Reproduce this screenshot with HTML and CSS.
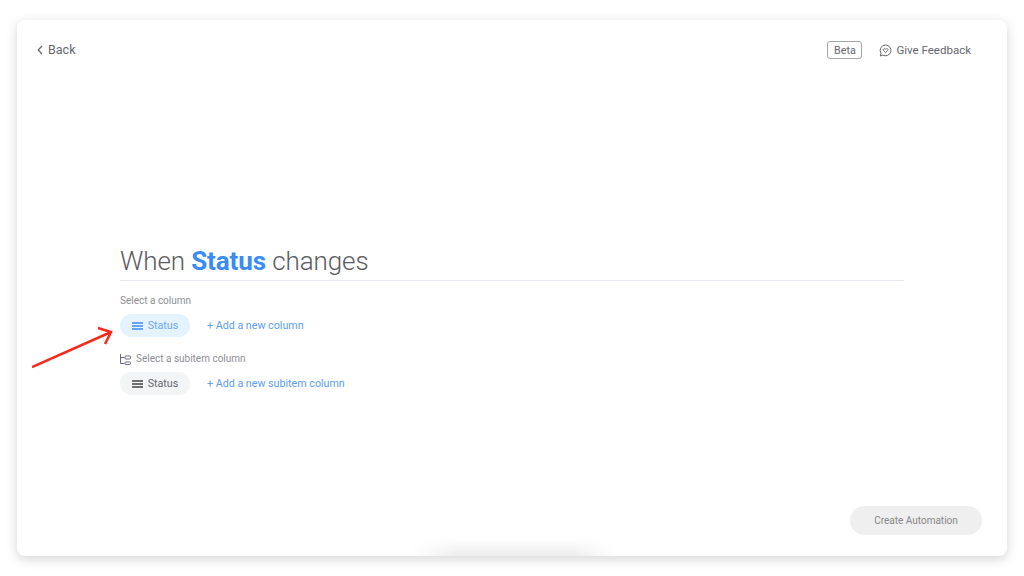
FILE: index.html
```html
<!DOCTYPE html>
<html lang="en">
<head>
    <meta charset="UTF-8">
    <meta name="viewport" content="width=device-width, initial-scale=1.0">
    <title>Create Automation</title>
    <link rel="stylesheet" href="styles.css">
</head>
<body>

<div class="card">
    <div class="top-bar">
        <a class="back-link">
            <svg class="back-icon" width="6" height="10" viewBox="0 0 6 10"><path d="M5 1L1.200 5L5 9" fill="none" stroke="#676879" stroke-width="1.300"/></svg>
            Back
        </a>
        <div class="top-actions">
            <span class="beta-tag">Beta</span>
            <a class="feedback-link">
                <svg width="13" height="13" viewBox="0 0 13 13" fill="none" stroke="#666" stroke-width="1">
                    <path d="M6.600 1a5.400 5.400 0 1 1-2.700 10.100L1.300 12l.7-2.700A5.400 5.400 0 0 1 6.600 1z"/>
                    <path d="M6.600 8.600L4.400 6.400c-.9-1.200.9-2.400 2.200-1.200 1.300-1.200 3.100 0 2.200 1.200z"/>
                </svg>
                Give Feedback
            </a>
        </div>
    </div>

    <div class="content">
        <h1 class="title">When <strong>Status</strong> changes</h1>

        <div class="field-label">Select a column</div>
        <div class="field-row">
            <span class="chip chip-active">
                <svg width="11" height="8" viewBox="0 0 11 8"><path d="M0 1h11M0 4h11M0 7h11" stroke="#3b8cf0" stroke-width="1.300"/></svg>
                Status
            </span>
            <a class="add-link">+ Add a new column</a>
        </div>

        <div class="field-label subitem-label">
            <svg width="11" height="11" viewBox="0 0 11 11" fill="none" stroke="#676879" stroke-width="1">
                <path d="M.5 0v9.500h4M.5 3.500h4"/>
                <rect x="5" y="2" width="5.500" height="3" rx=".8"/>
                <rect x="5" y="8" width="5.500" height="2.500" rx=".8"/>
            </svg>
            Select a subitem column
        </div>
        <div class="field-row">
            <span class="chip">
                <svg width="11" height="8" viewBox="0 0 11 8"><path d="M0 1h11M0 4h11M0 7h11" stroke="#444" stroke-width="1.300"/></svg>
                Status
            </span>
            <a class="add-link">+ Add a new subitem column</a>
        </div>
    </div>

    <div class="footer">
        <button class="create-button">Create Automation</button>
    </div>
</div>

<!-- annotation drawn over the page -->
<svg class="arrow" width="90" height="50" viewBox="0 0 90 50" fill="none" stroke="#f5291c" stroke-width="2.500">
    <path d="M0 43L78 8.500"/>
    <path d="M66 4L79 8L73 20"/>
</svg>

</body>
</html>
```

FILE: styles.css
```css
/* Global Styles */
body {
    background-color: #ffffff;
    color: #323338;
    font-family: 'Roboto', sans-serif;
    margin: 0;
    width: 1024px;
    height: 576px;
    overflow: hidden;
    position: relative;
    padding: 20px 17px;
    box-sizing: border-box;
}

.card {
    position: relative;
    height: 536px;
    box-sizing: border-box;
    padding: 0 25px 21px 20px;
    background: #ffffff;
    border-radius: 8px;
    box-shadow: 0 3px 12px rgba(0, 0, 0, 0.17);
    display: flex;
    flex-direction: column;
}

/* soft shadow at the bottom edge */
.card::after {
    content: "";
    position: absolute;
    left: 395px;
    bottom: 0;
    width: 205px;
    height: 18px;
    background: linear-gradient(to top, rgba(0, 0, 0, 0.07), rgba(0, 0, 0, 0));
    -webkit-mask-image: linear-gradient(to right, transparent, #000 22%, #000 78%, transparent);
    mask-image: linear-gradient(to right, transparent, #000 22%, #000 78%, transparent);
}

/* Top Bar */
.top-bar {
    display: flex;
    justify-content: space-between;
    align-items: center;
    height: 60px;
}

.back-link {
    display: flex;
    align-items: center;
    gap: 5px;
    font-size: 12.500px;
    color: #66676f;
    margin-top: -1px;
}

.top-actions {
    display: flex;
    align-items: center;
    gap: 17px;
    padding-right: 11px;
}

.beta-tag {
    display: flex;
    align-items: center;
    justify-content: center;
    width: 35px;
    height: 18px;
    box-sizing: border-box;
    border: 1px solid #a4a5af;
    border-radius: 3px;
    font-size: 10.700px;
    color: #66676f;
}

.feedback-link {
    display: flex;
    align-items: center;
    gap: 4px;
    font-size: 11.500px;
    color: #66676f;
}

/* Main Content */
.content {
    margin: 165px 78px 0 83px;
    flex: 1;
}

.title {
    margin: 0 0 13px;
    padding-bottom: 2px;
    border-bottom: 1px solid #e6e9ef;
    font-size: 26px;
    line-height: 33px;
    font-weight: 300;
    letter-spacing: -0.1px;
    color: #5a5b62;
}

.title strong {
    font-weight: 700;
    color: #3a8bf2;
}

.field-label {
    font-size: 10px;
    line-height: 14px;
    color: #8d8e95;
    margin-bottom: 6px;
}

.subitem-label {
    display: flex;
    align-items: center;
    gap: 5px;
}

.field-row {
    display: flex;
    align-items: center;
    gap: 17px;
    margin-bottom: 15px;
}

.chip {
    display: flex;
    align-items: center;
    justify-content: center;
    gap: 5px;
    width: 70px;
    height: 23px;
    border-radius: 12px;
    background: #f3f4f6;
    font-size: 10.700px;
    color: #66676f;
}

.chip-active {
    background: #e5f3ff;
    color: #6aa7f6;
}

.add-link {
    font-size: 10.700px;
    color: #5a9ef5;
}

/* Footer */
.footer {
    display: flex;
    justify-content: flex-end;
}

.create-button {
    width: 132px;
    height: 29px;
    border: none;
    border-radius: 15px;
    background: #efefef;
    font-family: 'Roboto', sans-serif;
    font-size: 10px;
    color: #868686;
    padding: 0;
}

/* Annotation */
.arrow {
    position: absolute;
    left: 32px;
    top: 324px;
}
```
